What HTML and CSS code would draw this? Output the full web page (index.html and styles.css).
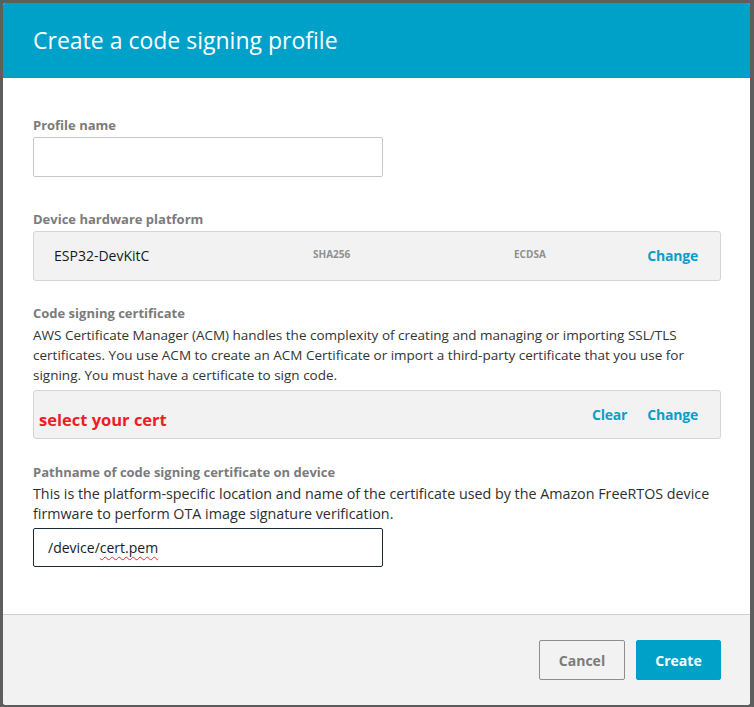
FILE: index.html
```html
<!DOCTYPE html>
<html>
<head>
<meta charset="utf-8">
<link rel="stylesheet" href="styles.css">
</head>
<body>
<div class="modal">
  <div class="modal-header">
    <h1 class="title">Create a code signing profile</h1>
  </div>
  <div class="modal-body">
    <div class="field f-profile">
      <div class="label">Profile name</div>
      <div class="input"></div>
    </div>
    <div class="field f-platform">
      <div class="label">Device hardware platform</div>
      <div class="box platform">
        <span class="platform-name">ESP32-DevKitC</span>
        <span class="meta">SHA256</span>
        <span class="meta">ECDSA</span>
        <span class="link">Change</span>
      </div>
    </div>
    <div class="field f-cert">
      <div class="label">Code signing certificate</div>
      <p class="desc desc-cert">AWS Certificate Manager (ACM) handles the complexity of creating and managing or importing SSL/TLS certificates. You use ACM to create an ACM Certificate or import a third-party certificate that you use for signing. You must have a certificate to sign code.</p>
      <div class="box cert">
        <span class="select-cert">select your cert</span>
        <span class="links"><span class="link">Clear</span><span class="link">Change</span></span>
      </div>
    </div>
    <div class="field f-path">
      <div class="label">Pathname of code signing certificate on device</div>
      <p class="desc desc-path">This is the platform-specific location and name of the certificate used by the Amazon FreeRTOS device firmware to perform OTA image signature verification.</p>
      <div class="input focused">/device/<span class="misspelled">cert.pem</span></div>
    </div>
  </div>
  <div class="modal-footer">
    <button class="btn btn-cancel">Cancel</button>
    <button class="btn btn-primary">Create</button>
  </div>
</div>
</body>
</html>
```
FILE: styles.css
```css
html, body {
  margin: 0;
  padding: 0;
}
body {
  width: 754px;
  height: 707px;
  background: #5e5e5e;
  font-family: "Open Sans", "Noto Sans", Arial, sans-serif;
  overflow: hidden;
  padding-top: 3px;
  box-sizing: border-box;
}
.modal {
  margin-left: 3px;
  width: 747px;
  height: 702px;
  background: #ffffff;
  border-radius: 3px;
  overflow: hidden;
  display: flex;
  flex-direction: column;
}
.modal-header {
  background: #00a1c9;
  height: 75px;
  flex: none;
  display: flex;
  align-items: center;
  padding-left: 30px;
}
.title {
  margin: 0;
  color: #ffffff;
  font-size: 23px;
  font-weight: 400;
  padding-bottom: 2px;
}
.modal-body {
  flex: 1;
  padding: 37px 30px 0 30px;
}
.label {
  font-size: 13px;
  font-weight: 700;
  color: #7b7b7b;
  line-height: 20px;
}
.desc {
  margin: 2px 0 0 0;
  font-size: 13px;
  line-height: 20px;
  color: #333333;
}
.desc-cert {
  font-size: 13.5px;
}
.desc-path {
  font-size: 14.3px;
  margin-top: 2px;
  color: #2e2e2e;
}
.input {
  margin-top: 2px;
  width: 350px;
  height: 40px;
  box-sizing: border-box;
  border: 1px solid #c6c6c6;
  border-radius: 2px;
  background: #fff;
  font-size: 14px;
  color: #16191f;
  display: flex;
  align-items: center;
  padding-left: 14px;
}
.input.focused {
  margin-top: 4px;
  border-color: #1b2b33;
  height: 39px;
}
.misspelled {
  text-decoration: underline wavy #e0302f;
  text-decoration-thickness: 1px;
  text-underline-offset: 3px;
}
.f-platform { margin-top: 32px; }
.f-cert { margin-top: 22px; }
.f-path { margin-top: 23px; }
.box {
  background: #f2f2f2;
  border: 1px solid #d5d5d5;
  border-radius: 3px;
  box-sizing: border-box;
  width: 688px;
  height: 50px;
}
.platform {
  margin-top: 2px;
  display: grid;
  grid-template-columns: 259px 201px 1fr auto;
  align-items: center;
  padding: 0 22px 2px 20px;
}
.platform-name {
  font-size: 14px;
  color: #16191f;
}
.meta {
  font-size: 10px;
  font-weight: 700;
  color: #8f8f8f;
  padding-bottom: 2px;
}
.link {
  font-size: 14px;
  font-weight: 700;
  color: #0a9fc9;
  letter-spacing: -0.2px;
}
.cert {
  margin-top: 5px;
  height: 49px;
  display: flex;
  justify-content: space-between;
  padding: 0 22px 0 5px;
}
.select-cert {
  align-self: center;
  margin-top: 10px;
  font-size: 16.5px;
  font-weight: 700;
  color: #ee1c25;
}
.links {
  display: flex;
  gap: 20px;
  align-self: center;
  margin-bottom: 1px;
}
.modal-footer {
  flex: none;
  height: 91px;
  box-sizing: border-box;
  background: #f2f2f2;
  border-top: 1px solid #cfcfcf;
  display: flex;
  justify-content: flex-end;
  align-items: flex-start;
  gap: 11px;
  padding: 25px 29px 0 0;
}
.btn {
  height: 40px;
  box-sizing: border-box;
  font-family: inherit;
  font-size: 14px;
  font-weight: 700;
  border-radius: 2px;
  cursor: pointer;
}
.btn-cancel {
  width: 86px;
  background: #f2f2f2;
  border: 1px solid #8e8e8e;
  color: #7b7b7b;
}
.btn-primary {
  width: 85px;
  background: #00a1c9;
  border: 1px solid #00a1c9;
  color: #ffffff;
}
```
